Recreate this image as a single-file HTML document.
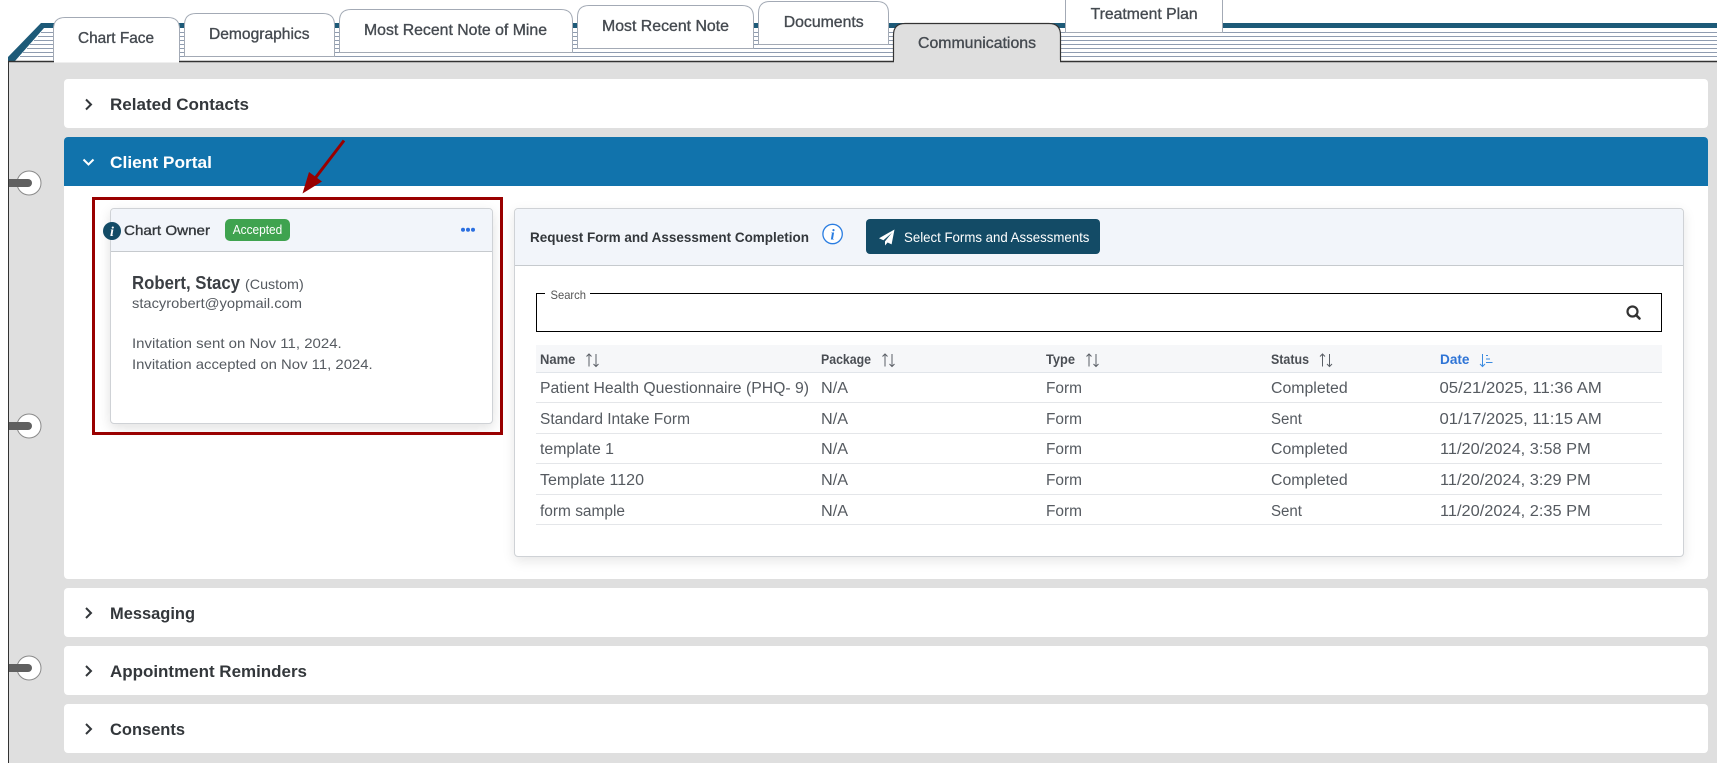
<!DOCTYPE html>
<html>
<head>
<meta charset="utf-8">
<title>Communications</title>
<style>
html,body{margin:0;padding:0;width:1717px;height:763px;overflow:hidden;background:#fff;}
body{position:relative;font-family:"Liberation Sans",sans-serif;}
.a{position:absolute;box-sizing:border-box;}
svg{position:absolute;left:0;top:0;}
text{font-family:"Liberation Sans",sans-serif;}
.tab{font-size:16px;fill:#454a50;stroke:#454a50;stroke-width:.35;}
.ttl{font-size:17px;font-weight:bold;fill:#33373b;}
.hd{font-size:13.5px;font-weight:bold;fill:#4a4e54;}
.td{font-size:15.5px;fill:#555a60;}
.sm{font-size:14px;fill:#555a60;}
</style>
</head>
<body>
<div class="a" style="left:8px;top:61px;width:1709px;height:702px;background:#dfdfdf;border-left:1.5px solid #333;border-top:1.5px solid #333;"></div>

<div class="a" style="left:64px;top:79px;width:1644px;height:49px;background:#fff;border-radius:4px;"></div>
<div class="a" style="left:64px;top:137px;width:1644px;height:442px;background:#fff;border-radius:4px;"></div>
<div class="a" style="left:64px;top:137px;width:1644px;height:49px;background:#1173ac;border-radius:4px 4px 0 0;"></div>
<div class="a" style="left:64px;top:588px;width:1644px;height:49px;background:#fff;border-radius:4px;"></div>
<div class="a" style="left:64px;top:646px;width:1644px;height:49px;background:#fff;border-radius:4px;"></div>
<div class="a" style="left:64px;top:704px;width:1644px;height:49px;background:#fff;border-radius:4px;"></div>

<!-- chart owner card -->
<div class="a" style="left:110px;top:208px;width:383px;height:216px;background:#fff;border:1px solid #cfd2d6;border-radius:4px;box-shadow:0 4px 12px rgba(0,0,0,.12);"></div>
<div class="a" style="left:111px;top:209px;width:381px;height:43px;background:#f2f5fa;border-bottom:1px solid #c6cace;border-radius:4px 4px 0 0;"></div>
<div class="a" style="left:92px;top:197px;width:411px;height:238px;border:3px solid #990000;"></div>

<!-- request card -->
<div class="a" style="left:514px;top:208px;width:1170px;height:349px;background:#fff;border:1px solid #cfd2d6;border-radius:4px;box-shadow:0 4px 12px rgba(0,0,0,.1);"></div>
<div class="a" style="left:515px;top:209px;width:1168px;height:57px;background:#f2f5fa;border-bottom:1px solid #c6cace;border-radius:4px 4px 0 0;"></div>
<div class="a" style="left:866px;top:219px;width:234px;height:35px;background:#134b66;border-radius:4px;"></div>
<div class="a" style="left:536px;top:293px;width:1126px;height:39px;border:1.5px solid #000;"></div>
<div class="a" style="left:545px;top:291px;width:45px;height:5px;background:#fff;"></div>
<div class="a" style="left:536px;top:345px;width:1126px;height:28px;background:#f6f7f9;border-bottom:1px solid #e1e5ea;"></div>
<div class="a" style="left:536px;top:402px;width:1126px;height:1px;background:#e4e6e9;"></div>
<div class="a" style="left:536px;top:433px;width:1126px;height:1px;background:#e4e6e9;"></div>
<div class="a" style="left:536px;top:463px;width:1126px;height:1px;background:#e4e6e9;"></div>
<div class="a" style="left:536px;top:494px;width:1126px;height:1px;background:#e4e6e9;"></div>
<div class="a" style="left:536px;top:524px;width:1126px;height:1px;background:#e4e6e9;"></div>

<svg width="1717" height="763" viewBox="0 0 1717 763">
  <!-- blue stripe + corner -->
  <rect x="42" y="23" width="1675" height="5" fill="#1d5a78"/>
  <rect x="889" y="0" width="176" height="23" fill="#fff"/>
  <polygon points="8,57 41,23 54,23 54,28 44,28 15,61 8,61" fill="#1d5a78"/>

  <!-- page lines -->
  <g stroke="#8f9cb0" stroke-width="1">
    <path d="M1065 32.5H1717"/>
    <path d="M41 32.5H1065"/>
    <path d="M38 36.5H1717"/>
    <path d="M34 40.5H1717"/>
    <path d="M30 44.5H1717"/>
    <path d="M27 48.5H1717"/>
    <path d="M23 52.5H1717"/>
    <path d="M20 56.5H1717"/>
  </g>
  <path d="M8 61.5H1717" stroke="#333" stroke-width="1.5"/>

  <!-- tabs, back to front -->
  <g fill="#fff" stroke="#a3aab5" stroke-width="1">
    <path d="M1065.5 32.5V-5H1222.5V32.5Z"/>
    <path d="M758.5 44.5V13Q758.5 1.5 770 1.5H877Q888.5 1.5 888.5 13V44.5Z"/>
    <path d="M577.5 48.5V17Q577.5 5.5 589 5.5H742Q753.5 5.5 753.5 17V48.5Z"/>
    <path d="M339.5 52.5V21Q339.5 9.5 351 9.5H561Q572.5 9.5 572.5 21V52.5Z"/>
    <path d="M184.5 56.5V25Q184.5 13.5 196 13.5H323Q334.5 13.5 334.5 25V56.5Z"/>
    <path d="M53.5 61V29Q53.5 17.5 65 17.5H168Q179.5 17.5 179.5 29V61"/>
  </g>
  <rect x="54" y="56" width="125" height="6.5" fill="#fff"/>
  <path d="M1222.5 28.5V32.5" stroke="#a3aab5" stroke-width="1"/>
  <path d="M893.5 62V35Q893.5 23.5 905 23.5H1049Q1060.5 23.5 1060.5 35V62" fill="#dfdfdf" stroke="#333" stroke-width="1.2"/>
  <rect x="894" y="60" width="166" height="4" fill="#dfdfdf"/>

  <text class="tab" x="78" y="43" textLength="76" lengthAdjust="spacingAndGlyphs">Chart Face</text>
  <text class="tab" x="209" y="39" textLength="100.5" lengthAdjust="spacingAndGlyphs">Demographics</text>
  <text class="tab" x="364" y="35" textLength="183" lengthAdjust="spacingAndGlyphs">Most Recent Note of Mine</text>
  <text class="tab" x="602" y="31" textLength="127" lengthAdjust="spacingAndGlyphs">Most Recent Note</text>
  <text class="tab" x="783.7" y="27" textLength="80" lengthAdjust="spacingAndGlyphs">Documents</text>
  <text class="tab" x="918" y="48" textLength="118" lengthAdjust="spacingAndGlyphs">Communications</text>
  <text class="tab" x="1090.6" y="19" textLength="107" lengthAdjust="spacingAndGlyphs">Treatment Plan</text>

  <!-- rings -->
  <g>
    <circle cx="29" cy="183" r="12" fill="#fff" stroke="#8a8a8a" stroke-width="1"/>
    <path d="M9 179H28A4 4 0 0 1 28 187H9Z" fill="#606060"/>
    <circle cx="29" cy="426" r="12" fill="#fff" stroke="#8a8a8a" stroke-width="1"/>
    <path d="M9 422H28A4 4 0 0 1 28 430H9Z" fill="#606060"/>
    <circle cx="29" cy="668" r="12" fill="#fff" stroke="#8a8a8a" stroke-width="1"/>
    <path d="M9 664H28A4 4 0 0 1 28 672H9Z" fill="#606060"/>
  </g>

  <!-- accordion titles -->
  <g fill="none" stroke="#33373b" stroke-width="2">
    <path d="M86 99.5L91 104.5L86 109.5"/>
    <path d="M86 608L91 613L86 618"/>
    <path d="M86 666L91 671L86 676"/>
    <path d="M86 724L91 729L86 734"/>
    <path d="M83.5 159.5L88.5 164.5L93.5 159.5" stroke="#fff"/>
  </g>
  <text class="ttl" x="110" y="110" textLength="139" lengthAdjust="spacingAndGlyphs">Related Contacts</text>
  <text class="ttl" x="110" y="168" textLength="102" lengthAdjust="spacingAndGlyphs" style="fill:#fff">Client Portal</text>
  <text class="ttl" x="110" y="619" textLength="85" lengthAdjust="spacingAndGlyphs">Messaging</text>
  <text class="ttl" x="110" y="677" textLength="197" lengthAdjust="spacingAndGlyphs">Appointment Reminders</text>
  <text class="ttl" x="110" y="735" textLength="75" lengthAdjust="spacingAndGlyphs">Consents</text>

  <!-- red arrow -->
  <path d="M344 140.5L313 181" stroke="#990000" stroke-width="3" fill="none"/>
  <polygon points="302.5,193.5 309,172 322,181.5" fill="#990000"/>

  <!-- chart owner card content -->
  <circle cx="112" cy="231" r="9" fill="#134b66"/>
  <text x="112" y="236" text-anchor="middle" style="font-family:'Liberation Serif',serif;font-style:italic;font-weight:bold;font-size:14px;fill:#fff">i</text>
  <text x="124" y="235" textLength="86" lengthAdjust="spacingAndGlyphs" style="font-size:14px;fill:#33373b;stroke:#33373b;stroke-width:.35">Chart Owner</text>
  <rect x="225" y="219" width="65" height="22" rx="5" fill="#3fa34f"/>
  <text x="232.7" y="234" textLength="49.6" lengthAdjust="spacingAndGlyphs" style="font-size:13px;fill:#fff">Accepted</text>
  <g fill="#2b6fe0"><circle cx="463" cy="229.7" r="2"/><circle cx="468" cy="229.7" r="2"/><circle cx="473" cy="229.7" r="2"/></g>
  <text x="132" y="289" textLength="108" lengthAdjust="spacingAndGlyphs" style="font-size:18px;font-weight:bold;fill:#3b3f44">Robert, Stacy</text>
  <text class="sm" x="245" y="289" textLength="58.7" lengthAdjust="spacingAndGlyphs">(Custom)</text>
  <text class="sm" x="132" y="308" textLength="170" lengthAdjust="spacingAndGlyphs">stacyrobert@yopmail.com</text>
  <text class="sm" x="132" y="348" textLength="209.7" lengthAdjust="spacingAndGlyphs">Invitation sent on Nov 11, 2024.</text>
  <text class="sm" x="132" y="369" textLength="240.7" lengthAdjust="spacingAndGlyphs">Invitation accepted on Nov 11, 2024.</text>

  <!-- request card header -->
  <text x="530" y="242" textLength="279" lengthAdjust="spacingAndGlyphs" style="font-size:14px;font-weight:bold;fill:#33373b">Request Form and Assessment Completion</text>
  <circle cx="832.6" cy="234" r="9.7" fill="#fff" stroke="#2a7de1" stroke-width="1.3"/>
  <text x="832.6" y="239.5" text-anchor="middle" style="font-family:'Liberation Serif',serif;font-style:italic;font-weight:bold;font-size:15px;fill:#2a7de1">i</text>
  <path transform="translate(879,229.5)" d="M15.5 0L0 8.8L4.4 10.8L13 3.2L6 11.9V16L8.6 13L12.6 14.9Z" fill="#fff"/>
  <text x="904" y="242" textLength="185.4" lengthAdjust="spacingAndGlyphs" style="font-size:14px;fill:#fff">Select Forms and Assessments</text>

  <!-- search -->
  <text x="550.5" y="299" textLength="35.5" lengthAdjust="spacingAndGlyphs" style="font-size:12px;fill:#555">Search</text>
  <circle cx="1632.5" cy="311.5" r="5" fill="none" stroke="#333" stroke-width="2.2"/>
  <path d="M1636 315L1639.5 318.5" stroke="#333" stroke-width="2.6" stroke-linecap="round"/>

  <!-- table header -->
  <text class="hd" x="540" y="364" textLength="35.4" lengthAdjust="spacingAndGlyphs">Name</text>
  <text class="hd" x="821" y="364" textLength="50" lengthAdjust="spacingAndGlyphs">Package</text>
  <text class="hd" x="1046" y="364" textLength="29" lengthAdjust="spacingAndGlyphs">Type</text>
  <text class="hd" x="1271" y="364" textLength="38" lengthAdjust="spacingAndGlyphs">Status</text>
  <text class="hd" x="1440" y="364" textLength="29.5" lengthAdjust="spacingAndGlyphs" style="fill:#2e74d6">Date</text>
  <g fill="none" stroke="#5a5f66" stroke-width="1">
    <path d="M589 366.5V354M586.5 356.5L589 354L591.5 356.5M596 354V366.5M593.5 364L596 366.5L598.5 364"/>
    <path d="M885 366.5V354M882.5 356.5L885 354L887.5 356.5M892 354V366.5M889.5 364L892 366.5L894.5 364"/>
    <path d="M1089 366.5V354M1086.5 356.5L1089 354L1091.5 356.5M1096 354V366.5M1093.5 364L1096 366.5L1098.5 364"/>
    <path d="M1322.5 366.5V354M1320 356.5L1322.5 354L1325 356.5M1329.5 354V366.5M1327 364L1329.5 366.5L1332 364"/>
    <path d="M1482.5 354V366.5M1480 364L1482.5 366.5L1485 364M1486 355.5H1488M1486 359H1490M1486 362.5H1492.5" stroke="#3b8be0"/>
  </g>

  <!-- table rows -->
  <text class="td" x="540" y="393" textLength="269" lengthAdjust="spacingAndGlyphs">Patient Health Questionnaire (PHQ- 9)</text>
  <text class="td" x="821" y="393" textLength="27" lengthAdjust="spacingAndGlyphs">N/A</text>
  <text class="td" x="1046" y="393" textLength="36" lengthAdjust="spacingAndGlyphs">Form</text>
  <text class="td" x="1271" y="393" textLength="76.7" lengthAdjust="spacingAndGlyphs">Completed</text>
  <text class="td" x="1439.5" y="393" textLength="162.3" lengthAdjust="spacingAndGlyphs">05/21/2025, 11:36 AM</text>

  <text class="td" x="540" y="424" textLength="150" lengthAdjust="spacingAndGlyphs">Standard Intake Form</text>
  <text class="td" x="821" y="424" textLength="27" lengthAdjust="spacingAndGlyphs">N/A</text>
  <text class="td" x="1046" y="424" textLength="36" lengthAdjust="spacingAndGlyphs">Form</text>
  <text class="td" x="1271" y="424" textLength="31" lengthAdjust="spacingAndGlyphs">Sent</text>
  <text class="td" x="1439.5" y="424" textLength="162.3" lengthAdjust="spacingAndGlyphs">01/17/2025, 11:15 AM</text>

  <text class="td" x="540" y="454" textLength="74" lengthAdjust="spacingAndGlyphs">template 1</text>
  <text class="td" x="821" y="454" textLength="27" lengthAdjust="spacingAndGlyphs">N/A</text>
  <text class="td" x="1046" y="454" textLength="36" lengthAdjust="spacingAndGlyphs">Form</text>
  <text class="td" x="1271" y="454" textLength="76.7" lengthAdjust="spacingAndGlyphs">Completed</text>
  <text class="td" x="1440" y="454" textLength="150.7" lengthAdjust="spacingAndGlyphs">11/20/2024, 3:58 PM</text>

  <text class="td" x="540" y="485" textLength="104" lengthAdjust="spacingAndGlyphs">Template 1120</text>
  <text class="td" x="821" y="485" textLength="27" lengthAdjust="spacingAndGlyphs">N/A</text>
  <text class="td" x="1046" y="485" textLength="36" lengthAdjust="spacingAndGlyphs">Form</text>
  <text class="td" x="1271" y="485" textLength="76.7" lengthAdjust="spacingAndGlyphs">Completed</text>
  <text class="td" x="1440" y="485" textLength="150.7" lengthAdjust="spacingAndGlyphs">11/20/2024, 3:29 PM</text>

  <text class="td" x="540" y="516" textLength="85" lengthAdjust="spacingAndGlyphs">form sample</text>
  <text class="td" x="821" y="516" textLength="27" lengthAdjust="spacingAndGlyphs">N/A</text>
  <text class="td" x="1046" y="516" textLength="36" lengthAdjust="spacingAndGlyphs">Form</text>
  <text class="td" x="1271" y="516" textLength="31" lengthAdjust="spacingAndGlyphs">Sent</text>
  <text class="td" x="1440" y="516" textLength="150.7" lengthAdjust="spacingAndGlyphs">11/20/2024, 2:35 PM</text>
</svg>
</body>
</html>
